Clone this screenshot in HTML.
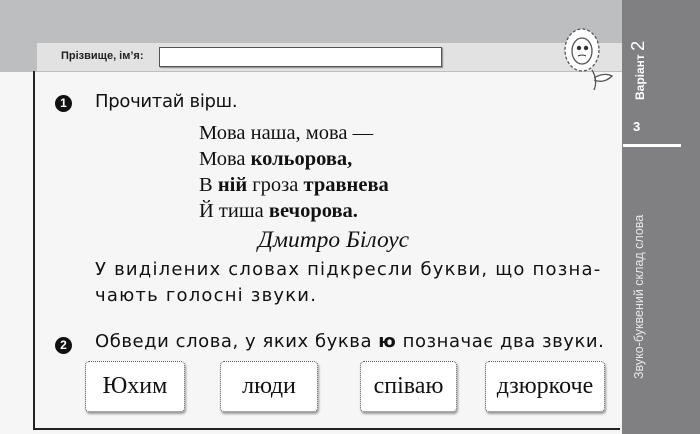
<!DOCTYPE html>
<html><head><meta charset="utf-8"><style>
body{margin:0;width:700px;height:434px;overflow:hidden;background:#f6f6f6;position:relative;font-family:"Liberation Sans","DejaVu Sans",sans-serif;}
.a{position:absolute;white-space:nowrap;}
.top{left:0;top:0;width:622px;height:72px;background:#bdbec0;}
.strip{left:37px;top:43px;width:585px;height:28px;background:#e2e2e2;}
.side{left:622px;top:0;width:78px;height:434px;background:#808083;}
.sans{font-family:"DejaVu Sans","Liberation Sans",sans-serif;font-size:18px;color:#111;}
.ser{font-family:"Liberation Serif",serif;font-size:20.5px;color:#111;}
.num{width:17px;height:17px;border-radius:50%;background:#111;color:#fff;font-size:12px;font-weight:bold;text-align:center;line-height:17px;}
.box{top:361px;height:49px;border:1px dotted #555;border-radius:4px;background:#fff;box-shadow:1px 2px 2px #999;font-family:"Liberation Serif",serif;font-size:24px;text-align:center;line-height:49px;color:#111;}
</style></head><body>
<div class="a top"></div>
<div class="a strip"></div>
<div class="a side"></div>
<div class="a" style="left:623px;top:144px;width:58px;height:3px;background:#fff"></div>
<div class="a" style="left:61px;top:50px;font-size:11px;font-weight:bold;color:#222">Прізвище, ім’я:</div>
<div class="a" style="left:159px;top:47px;width:281px;height:18px;background:#fff;border:1px solid #555;box-shadow:1px 1px 1px #888"></div>
<div class="a" style="left:33px;top:71px;width:2px;height:359px;background:#222"></div>
<div class="a" style="left:33px;top:428px;width:587px;height:2px;background:#222"></div>
<svg class="a" style="left:562px;top:26px" width="56" height="66" viewBox="0 0 56 66"><g fill="#fff" stroke="#555" stroke-width="1.3"><path d="M30 44 Q36 54 32 64 M32 52 Q42 46 50 50 Q42 58 32 54" /><ellipse cx="20" cy="24" rx="17" ry="21" stroke-dasharray="3 2"/><ellipse cx="20" cy="25" rx="10" ry="13"/></g><circle cx="17" cy="22" r="2.2" fill="#333"/><circle cx="24" cy="22" r="2.2" fill="#333"/><path d="M16 30 Q20 28 24 30" stroke="#333" fill="none"/></svg>
<div class="a" style="left:628px;top:100px;transform:rotate(-90deg);transform-origin:0 0;color:#fff;font-size:12px;font-weight:bold">Варіант <span style="font-size:18px;font-weight:normal">2</span></div>
<div class="a" style="left:633px;top:119px;color:#fff;font-size:13px;font-weight:bold">3</div>
<div class="a" style="left:632px;top:379px;transform:rotate(-90deg);transform-origin:0 0;color:#e8e8e8;font-size:12.5px">Звуко-буквений склад слова</div>
<div class="a num" style="left:55px;top:95px">1</div>
<div class="a sans" style="left:95px;top:91px;letter-spacing:-0.3px">Прочитай вірш.</div>
<div class="a ser" style="left:199px;top:120px;line-height:26px">Мова наша, мова —<br>Мова <b>кольорова,</b><br>В <b>ній</b> гроза <b>травнева</b><br>Й тиша <b>вечорова.</b></div>
<div class="a ser" style="left:258px;top:227px;font-style:italic;font-size:23.5px">Дмитро Білоус</div>
<div class="a sans" style="left:95px;top:257px;line-height:26px;letter-spacing:1.2px">У виділених словах підкресли букви, що позна-<br>чають голосні звуки.</div>
<div class="a num" style="left:55px;top:337px">2</div>
<div class="a sans" style="left:95px;top:331px;letter-spacing:0.55px">Обведи слова, у яких буква <b>ю</b> позначає два звуки.</div>
<div class="a box" style="left:85px;width:98px">Юхим</div>
<div class="a box" style="left:220px;width:96px">люди</div>
<div class="a box" style="left:360px;width:95px">співаю</div>
<div class="a box" style="left:485px;width:118px">дзюркоче</div>
</body></html>
